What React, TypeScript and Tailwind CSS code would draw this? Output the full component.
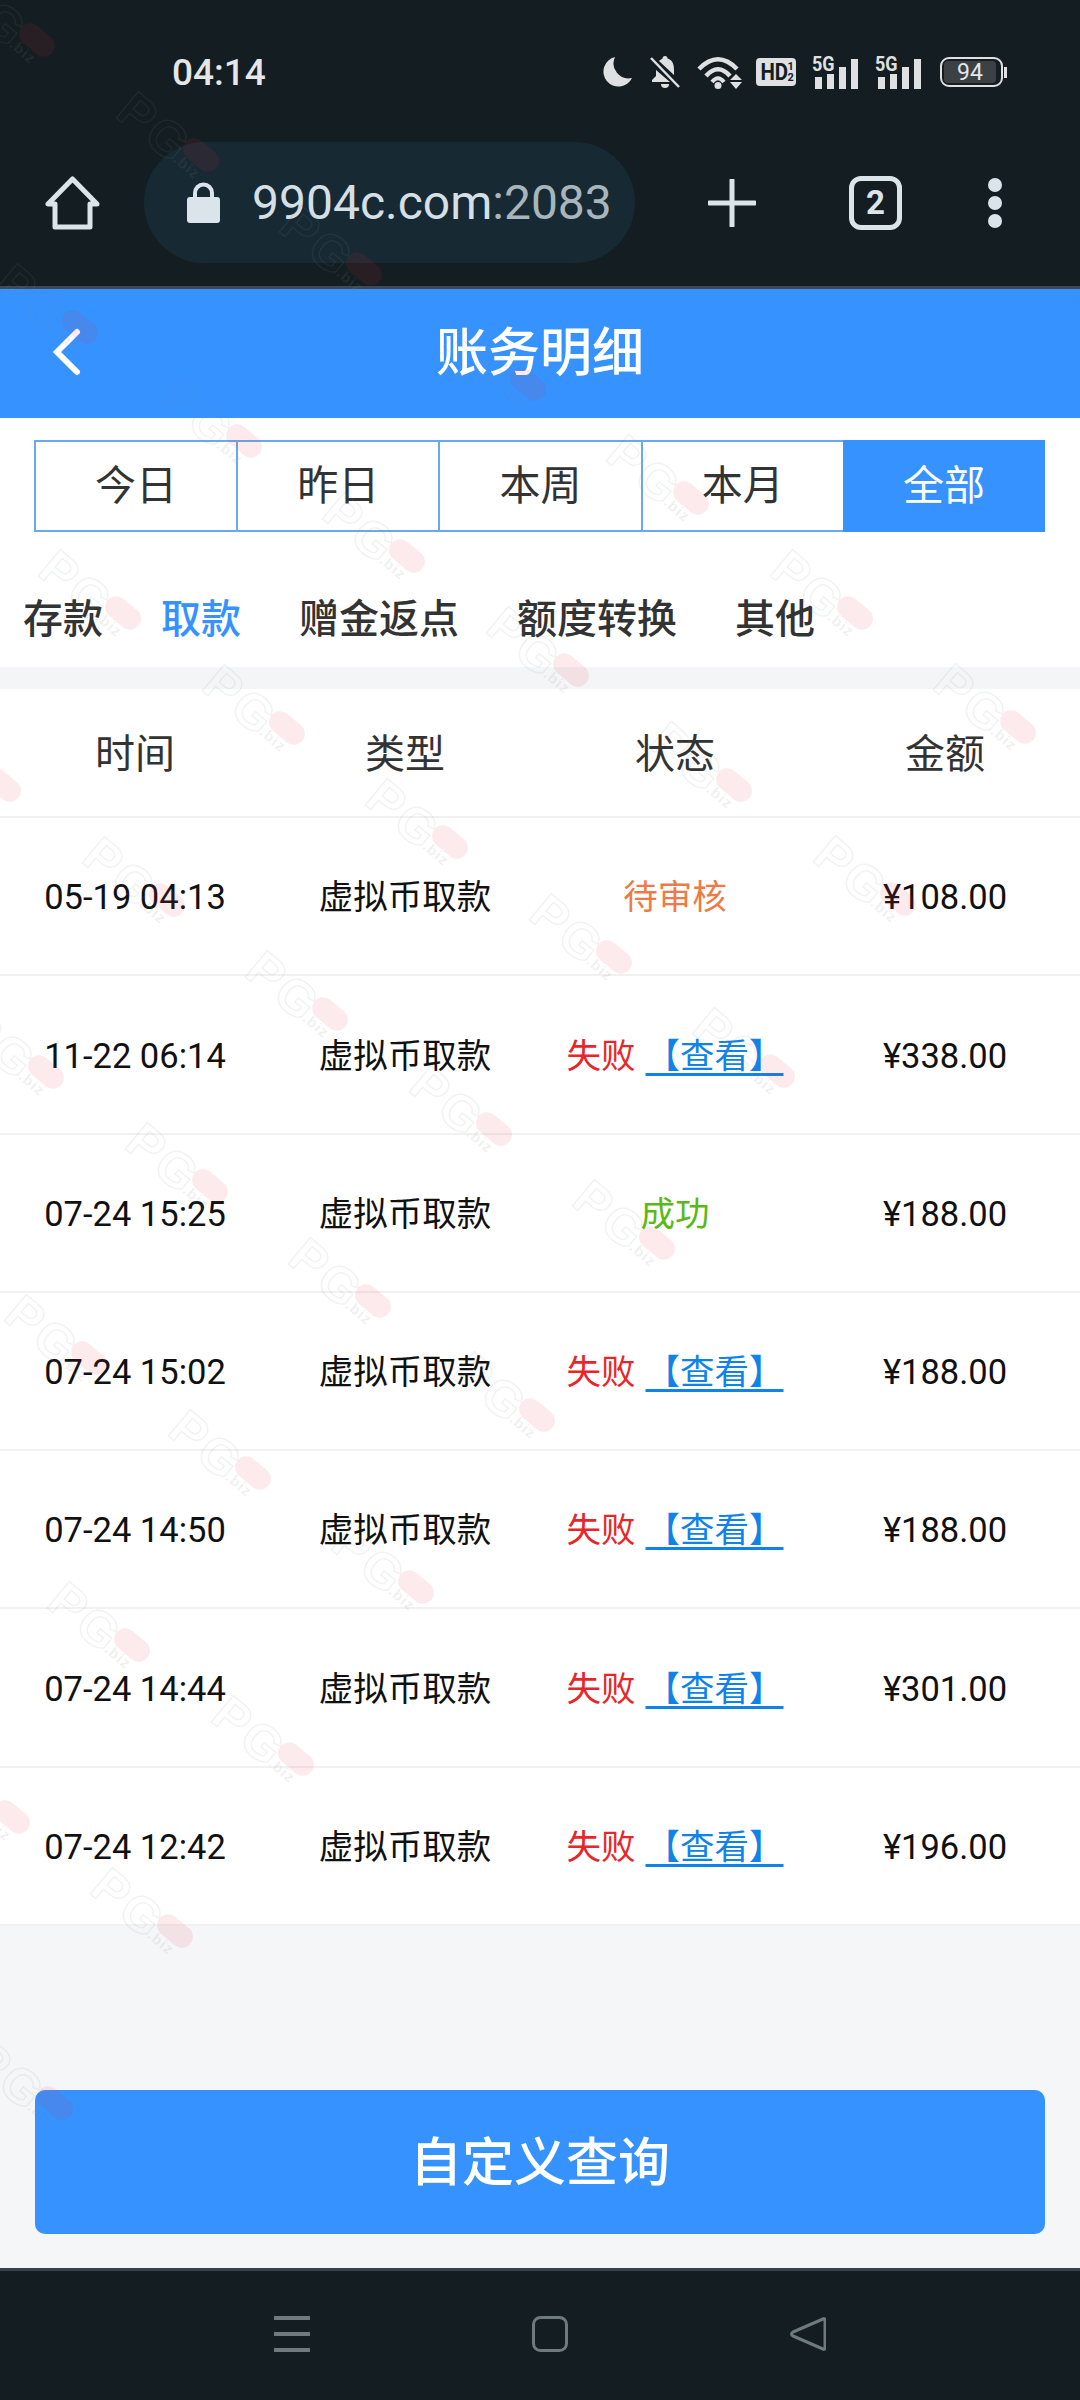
const rows = [
  { time: "05-19 04:13", status: "pending", amount: "¥108.00" },
  { time: "11-22 06:14", status: "failed", amount: "¥338.00" },
  { time: "07-24 15:25", status: "success", amount: "¥188.00" },
  { time: "07-24 15:02", status: "failed", amount: "¥188.00" },
  { time: "07-24 14:50", status: "failed", amount: "¥188.00" },
  { time: "07-24 14:44", status: "failed", amount: "¥301.00" },
  { time: "07-24 12:42", status: "failed", amount: "¥196.00" },
];

// watermark grid, measured from the red blobs
// it stops at i = 2 and j = -3, the rest of the screen has none
function watermarkPoints() {
  const points: { x: number; y: number }[] = [];
  for (let i = -6; i <= 2; i++) {
    for (let j = -3; j <= 6; j++) {
      const x = 330 + i * 163.5 - j * 120.4;
      const y = 1014 + i * 114.5 + j * 172;
      if (x > -40 && x < 1160 && y > -40 && y < 2460) points.push({ x, y });
    }
  }
  return points;
}

function Watermark({ x, y }: { x: number; y: number }) {
  return (
    <div className="absolute w-0 h-0 origin-top-left rotate-[40deg]" style={{ left: x, top: y }}>
      <span className="absolute left-[-92px] top-[-16px] text-[50px] leading-none font-bold tracking-[3px] text-transparent [font-family:'Liberation_Sans',sans-serif] [-webkit-text-stroke:1.5px_rgba(130,135,140,0.11)]">
        PG
      </span>
      <span className="absolute left-[-20px] top-[-11px] w-[40px] h-[22px] rounded-full bg-[rgba(225,50,70,0.1)]" />
      <span className="absolute left-[-18px] top-[10px] text-[15px] leading-none font-bold tracking-[1px] text-[rgba(130,135,140,0.13)] [font-family:'Liberation_Sans',sans-serif]">
        .biz
      </span>
    </div>
  );
}

function Signal({ className }: { className: string }) {
  return (
    <div className={`relative w-[46px] h-[34px] flex items-end gap-[5px] ${className}`}>
      <span className="absolute left-[-3px] top-0 text-[20px] leading-[19px] font-bold text-[#dfe0e2] scale-x-90 origin-left">5G</span>
      <div className="w-[7px] h-[12px] bg-[#dfe0e2]" />
      <div className="w-[7px] h-[15px] bg-[#dfe0e2]" />
      <div className="w-[7px] h-[22px] bg-[#dfe0e2]" />
      <div className="w-[7px] h-[30px] bg-[#dfe0e2]" />
    </div>
  );
}

function StatusBar() {
  return (
    <div className="h-[142px] flex items-start pt-[55px] pl-[172px] pr-[73px] text-[#e4e6e8]">
      <span className="h-[34px] flex items-center text-[37px] leading-none font-medium">04:14</span>
      <div className="ml-auto flex items-center h-[34px]">
        <svg width="30" height="30" viewBox="0 0 30 30">
          <path d="M13 0A15 15 0 1 0 30 21A15 15 0 0 1 13 0Z" fill="#dfe0e2" />
        </svg>
        <svg className="ml-[18px]" width="30" height="34" viewBox="0 0 30 34">
          <path d="M6 9V15L20 27H2V25L6 21V9M9 6C10 5 12 4 12.5 3.5A2.5 2.5 0 0 1 17.5 3.5C23 5 24 10 24 15V20Z" fill="#dfe0e2" />
          <path d="M1 3L29 32" stroke="#141d21" strokeWidth="5" />
          <path d="M1 3L29 32" stroke="#dfe0e2" strokeWidth="2.5" />
          <path d="M11 29h8a4 4 0 0 1-8 0z" fill="#dfe0e2" />
        </svg>
        <svg className="ml-[17px]" width="45" height="33" viewBox="0 0 45 33" fill="none">
          <path d="M2 13C15 0 27 0 40 13" stroke="#dfe0e2" strokeWidth="4.5" />
          <path d="M9 20C17 11 25 11 33 20" stroke="#dfe0e2" strokeWidth="4.5" />
          <path d="M15 26C19 21 23 21 27 26" stroke="#dfe0e2" strokeWidth="4" />
          <circle cx="21" cy="29.5" r="3.5" fill="#dfe0e2" />
          <path d="M33 24L39 18L45 24ZM33 26L45 26L39 33Z" fill="#dfe0e2" />
        </svg>
        <div className="ml-[14px] w-[40px] h-[28px] rounded-[4px] bg-[#dfe0e2] flex items-center justify-center text-[#141d21] font-bold">
          <span className="text-[24px] leading-none scale-x-[0.85] -mr-[3px]">HD</span>
          <span className="flex flex-col text-[11px] leading-[11px]">
            <span>1</span>
            <span>2</span>
          </span>
        </div>
        <Signal className="ml-[19px]" />
        <Signal className="ml-[17px]" />
        <div className="ml-[16px] flex items-center">
          <div className="w-[63px] h-[30px] rounded-[9px] border-2 border-[#dfe0e2] p-[2px]">
            <div className="w-[52px] h-full rounded-[4px] bg-[#3b4145] flex items-center justify-center text-[23px] leading-none text-[#e4e6e8]">
              94
            </div>
          </div>
          <div className="w-[3px] h-[11px] ml-[1px] bg-[#dfe0e2]" />
        </div>
      </div>
    </div>
  );
}

function BrowserBar() {
  return (
    <div className="h-[121px] flex items-center pl-[45px] text-[#dbe4ea]">
      <svg width="55" height="54" viewBox="0 0 55 54" fill="none">
        <path d="M27.5 3L3 28H10V51H45V28H52Z" stroke="#dbe4ea" strokeWidth="5" strokeLinejoin="round" />
      </svg>
      <div className="ml-[44px] w-[491px] h-[121px] rounded-full bg-[#172a33] flex items-center pl-[43px]">
        <svg width="33" height="41" viewBox="0 0 33 41" fill="none">
          <path d="M8 17V11a8.5 8.5 0 0 1 17 0v6" stroke="#dbe4ea" strokeWidth="4" />
          <rect x="0" y="15" width="33" height="26" rx="3" fill="#dbe4ea" />
        </svg>
        <span className="ml-[32px] text-[48px] leading-none text-[#d5dfe6]">
          9904c.com<span className="text-[#a9b5bc]">:2083</span>
        </span>
      </div>
      <svg className="ml-[73px]" width="48" height="48" viewBox="0 0 48 48">
        <path d="M24 1V47M1 24H47" stroke="#dbe4ea" strokeWidth="5" strokeLinecap="round" />
      </svg>
      <div className="ml-[93px] w-[53px] h-[54px] rounded-[12px] border-[5px] border-[#dbe4ea] flex items-center justify-center text-[33px] leading-none font-bold">
        2
      </div>
      <div className="ml-[86px] flex flex-col gap-[4px]">
        <div className="w-[14px] h-[14px] rounded-full bg-[#dbe4ea]" />
        <div className="w-[14px] h-[14px] rounded-full bg-[#dbe4ea]" />
        <div className="w-[14px] h-[14px] rounded-full bg-[#dbe4ea]" />
      </div>
    </div>
  );
}

function StatusCell({ status }: { status: string }) {
  if (status === "pending") return <span className="text-[#ee7a47]">待审核</span>;
  if (status === "success") return <span className="text-[#5bb915]">成功</span>;
  return (
    <span className="flex items-center">
      <span className="text-[#e8262a]">失败</span>
      <a className="ml-[10px] text-[#1083ea] underline decoration-[3px] underline-offset-[5px]">【查看】</a>
    </span>
  );
}

export default function App() {
  const periods = ["今日", "昨日", "本周", "本月"];
  const kinds = ["存款", "取款", "赠金返点", "额度转换", "其他"];

  return (
    <div className="relative w-[1080px] h-[2400px] overflow-hidden flex flex-col bg-white [font-family:Roboto,'Noto_Sans_CJK_SC',sans-serif]">
      {/* Top dark bars */}
      <div className="h-[289px] shrink-0 bg-[#141d21] border-b-[3px] border-[#3b4a55]">
        <StatusBar />
        <BrowserBar />
      </div>

      {/* Title */}
      <div className="h-[129px] shrink-0 bg-[#3592ff] flex items-center justify-center relative">
        <svg className="absolute left-[50px] top-[38px]" width="32" height="50" viewBox="0 0 32 50" fill="none">
          <path d="M27 5L7 25L27 45" stroke="white" strokeWidth="6" strokeLinecap="round" strokeLinejoin="miter" />
        </svg>
        <span className="text-[52px] leading-none font-medium text-white">账务明细</span>
      </div>

      {/* Period tabs */}
      <div className="shrink-0 pl-[34px] pr-[35px] pt-[22px]">
        <div className="grid grid-cols-5 h-[92px] text-[41px] text-[#333333]">
          {periods.map((p) => (
            <div key={p} className="flex items-center justify-center pt-[2px] border-y-2 border-l-2 border-[#69a9ee]">
              {p}
            </div>
          ))}
          <div className="flex items-center justify-center pt-[2px] bg-[#3592ff] text-white">全部</div>
        </div>
      </div>

      {/* Type tabs */}
      <div className="h-[135px] shrink-0 flex items-center gap-[58px] pl-[23px] pt-[41px] text-[40px] font-medium text-[#333333]">
        {kinds.map((k) => (
          <span key={k} className={k === "取款" ? "text-[#3592ff]" : ""}>
            {k}
          </span>
        ))}
      </div>
      <div className="h-[22px] shrink-0 bg-[#f4f5f7]" />

      {/* Table */}
      <div className="shrink-0 grid grid-cols-4 h-[129px] pt-[5px] border-b-2 border-[#f1f1f1] text-[40px] text-[#333333]">
        {["时间", "类型", "状态", "金额"].map((h) => (
          <div key={h} className="flex items-center justify-center">
            {h}
          </div>
        ))}
      </div>
      {rows.map((row, i) => (
        <div key={i} className="shrink-0 grid grid-cols-4 h-[158.3px] pt-[4px] border-b-2 border-[#f1f1f1] text-[34.5px] text-[#111111]">
          <div className="flex items-center justify-center">{row.time}</div>
          <div className="flex items-center justify-center">虚拟币取款</div>
          <div className="flex items-center justify-center">
            <StatusCell status={row.status} />
          </div>
          <div className="flex items-center justify-center">{row.amount}</div>
        </div>
      ))}

      {/* Query button */}
      <div className="flex-1 bg-[#f5f6f8] flex flex-col justify-end px-[35px] pb-[34px]">
        <button className="h-[144px] pt-[3px] rounded-[10px] bg-[#3592ff] text-white text-[52px] font-medium">自定义查询</button>
      </div>

      {/* Android nav bar */}
      <div className="h-[132px] shrink-0 bg-[#141d21] border-t-[3px] border-[#34434c] flex items-start pl-[274px] pt-[45px]">
        <svg width="36" height="36" viewBox="0 0 36 36">
          <path d="M0 2H36M0 18H36M0 34H36" stroke="#6e7a7e" strokeWidth="4" />
        </svg>
        <svg className="ml-[222px]" width="36" height="36" viewBox="0 0 36 36" fill="none">
          <rect x="1.5" y="1.5" width="33" height="33" rx="7" stroke="#6e7a7e" strokeWidth="3" />
        </svg>
        <svg className="ml-[222px]" width="36" height="36" viewBox="0 0 36 36" fill="none">
          <path d="M33 3C34 2 35 3 35 4V32C35 33 34 34 33 33L3 20C1 19 1 17 3 16Z" stroke="#6e7a7e" strokeWidth="3" strokeLinejoin="round" />
        </svg>
      </div>

      {/* Screenshot watermark */}
      <div className="absolute inset-0 pointer-events-none overflow-hidden">
        {watermarkPoints().map((p) => (
          <Watermark key={`${p.x}-${p.y}`} x={p.x} y={p.y} />
        ))}
      </div>
    </div>
  );
}
